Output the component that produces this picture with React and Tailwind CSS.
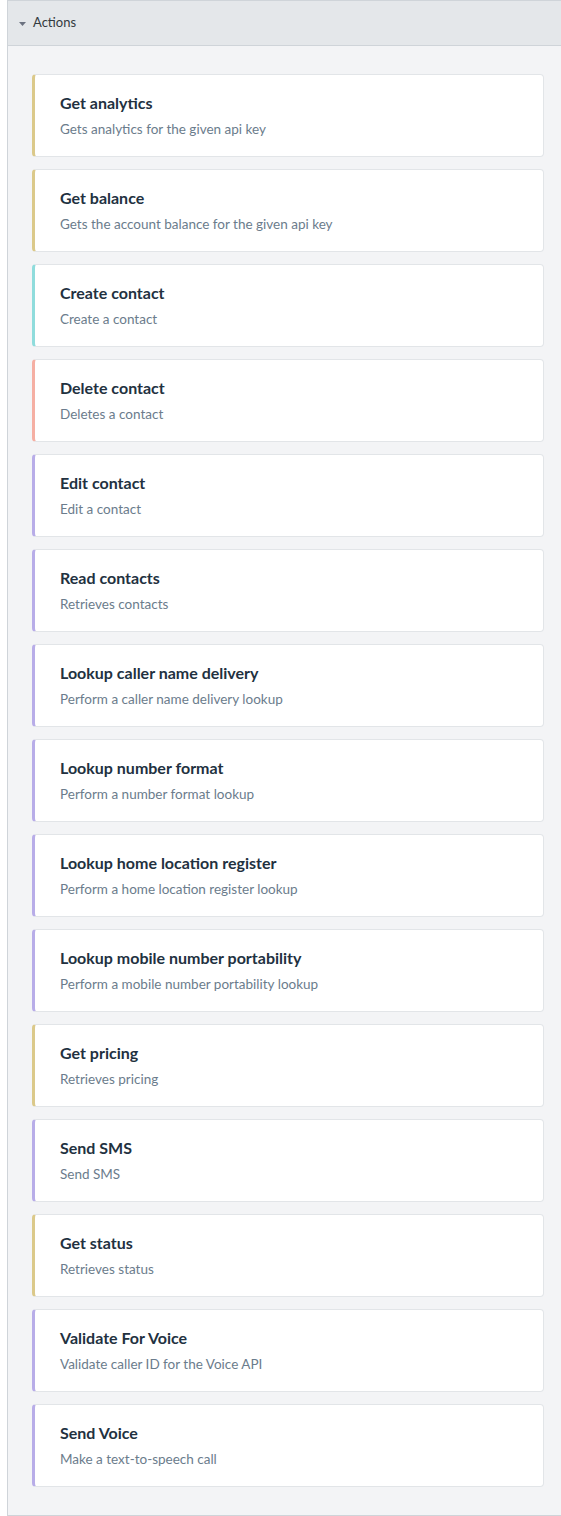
import React from 'react';

const actions = [
  { title: 'Get analytics', desc: 'Gets analytics for the given api key', color: 'border-l-[#dbc98a]' },
  { title: 'Get balance', desc: 'Gets the account balance for the given api key', color: 'border-l-[#dbc98a]' },
  { title: 'Create contact', desc: 'Create a contact', color: 'border-l-[#8fdcdc]' },
  { title: 'Delete contact', desc: 'Deletes a contact', color: 'border-l-[#f5afa3]' },
  { title: 'Edit contact', desc: 'Edit a contact', color: 'border-l-[#b8ade8]' },
  { title: 'Read contacts', desc: 'Retrieves contacts', color: 'border-l-[#b8ade8]' },
  { title: 'Lookup caller name delivery', desc: 'Perform a caller name delivery lookup', color: 'border-l-[#b8ade8]' },
  { title: 'Lookup number format', desc: 'Perform a number format lookup', color: 'border-l-[#b8ade8]' },
  { title: 'Lookup home location register', desc: 'Perform a home location register lookup', color: 'border-l-[#b8ade8]' },
  { title: 'Lookup mobile number portability', desc: 'Perform a mobile number portability lookup', color: 'border-l-[#b8ade8]' },
  { title: 'Get pricing', desc: 'Retrieves pricing', color: 'border-l-[#dbc98a]' },
  { title: 'Send SMS', desc: 'Send SMS', color: 'border-l-[#b8ade8]' },
  { title: 'Get status', desc: 'Retrieves status', color: 'border-l-[#dbc98a]' },
  { title: 'Validate For Voice', desc: 'Validate caller ID for the Voice API', color: 'border-l-[#b8ade8]' },
  { title: 'Send Voice', desc: 'Make a text-to-speech call', color: 'border-l-[#b8ade8]' },
];

export default function App() {
  return (
    <div className="w-[561px] overflow-hidden bg-white font-['Lato','Liberation_Sans',sans-serif]">
      <div className="ml-[7px] w-[562px] border border-[#cfd4d9] bg-[#f3f4f6]">
        {/* Header */}
        <div className="flex h-[45px] items-center gap-[7px] border-b border-[#cfd4d9] bg-[#e4e7ea] pl-[11px]">
          <svg width="7" height="4" viewBox="0 0 7 4" className="mt-[1px]">
            <path d="M0 0 L7 0 L3.5 4 Z" fill="#6b7280" />
          </svg>
          <span className="text-[13px] text-[#333a40]">Actions</span>
        </div>

        {/* Cards */}
        <div className="flex flex-col gap-3 pl-6 pr-6 pt-7 pb-7">
          {actions.map((a) => (
            <div
              key={a.title}
              className={`rounded border border-[#e2e5e8] border-l-[3px] bg-white pt-[18px] pb-[18px] pl-[25px] ${a.color}`}
            >
              <div className="text-[16px] leading-5 font-bold text-[#22313f]">{a.title}</div>
              <div className="mt-[7px] text-[13.5px] leading-[18px] text-[#6b7c8c]">{a.desc}</div>
            </div>
          ))}
        </div>
      </div>
    </div>
  );
}
